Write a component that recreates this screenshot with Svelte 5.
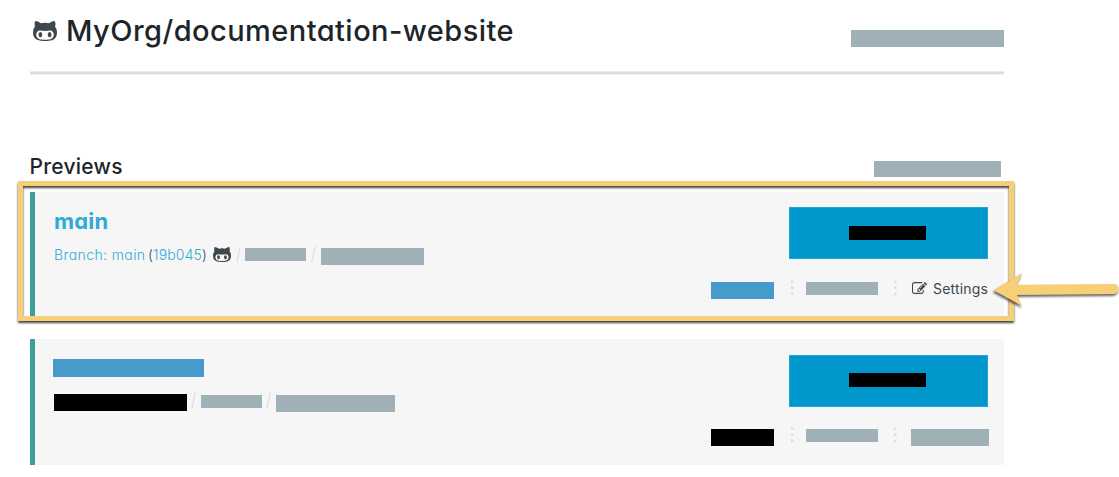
<script>
  const catPath = "M640 1088q0 40-12.5 82t-43 76-72.5 34-72.5-34-43-76-12.5-82 12.5-82 43-76 72.5-34 72.5 34 43 76 12.5 82zm640 0q0 40-12.5 82t-43 76-72.5 34-72.5-34-43-76-12.5-82 12.5-82 43-76 72.5-34 72.5 34 43 76 12.5 82zm160 0q0-120-69-204t-187-84q-41 0-195 21-71 11-157 11t-157-11q-152-21-195-21-118 0-187 84t-69 204q0 88 32 153.5t81 103 122 60 140 29.5 149 7h168q82 0 149-7t140-29.5 122-60 81-103 32-153.5zm224-176q0 207-61 331-38 77-105.5 133t-141 86-170 47.5-171.5 22-167 4.5q-78 0-142-3t-147.5-12.5-152.5-30-137-51.5-121-81-86-115q-62-123-62-331 0-237 136-396-27-82-27-170 0-116 51-218 108 0 190 39.5t189 123.5q147-35 309-35 148 0 280 32 105-82 187-121t189-39q51 102 51 218 0 87-27 168 136 160 136 398z";
  const editPath = "M888 1184l116-116-152-152-116 116v56h96v96h56zm440-720q-16-16-33 1l-350 350q-17 17-1 33t33-1l350-350q17-17 1-33zm80 594v190q0 119-84.5 203.5t-203.5 84.5h-832q-119 0-203.5-84.5t-84.5-203.5v-832q0-119 84.5-203.5t203.5-84.5h832q63 0 117 25 15 7 18 23 3 17-9 29l-49 49q-14 14-32 8-23-6-45-6h-832q-66 0-113 47t-47 113v832q0 66 47 113t113 47h832q66 0 113-47t47-113v-126q0-13 9-22l64-64q15-15 35-7t20 29zm-96-738l288 288-672 672h-288v-288zm444 132l-92 92-288-288 92-92q28-28 68-28t68 28l152 152q28 28 28 68t-28 68z";
</script>

{#snippet cat()}
  <svg class="cat" viewBox="0 128 1664 1408" preserveAspectRatio="none"><path d={catPath} /></svg>
{/snippet}

{#snippet slash()}
  <svg class="slash" viewBox="0 0 5 17"><path d="M4.3 .5 .8 16.3" /></svg>
{/snippet}

{#snippet dots()}
  <svg class="dots" viewBox="0 0 3 16"><path d="M0 .5h2.5v2.5H0zM0 6.5h2.5V9H0zM0 12.8h2.5v2.5H0z" /></svg>
{/snippet}

<main>
  <header>
    <h1>{@render cat()}<span>MyOrg/documentation-website</span></h1>
    <div class="bar header-bar"></div>
  </header>
  <div class="rule"></div>

  <div class="heading">
    <h2>Previews</h2>
    <div class="bar heading-bar"></div>
  </div>

  <section class="card first">
    <div class="info">
      <h3>main</h3>
      <div class="meta">
        <span class="branch">Branch: main</span>
        <span class="commit">(<b>19b045</b>)</span>
        {@render cat()}
        {@render slash()}
        <div class="bar short"></div>
        {@render slash()}
        <div class="bar long"></div>
      </div>
    </div>
    <div class="side">
      <div class="button"><i></i></div>
      <div class="actions">
        <div class="bar action blue"></div>
        {@render dots()}
        <div class="bar option"></div>
        {@render dots()}
        <div class="settings">
          <svg class="edit" viewBox="0 128 1792 1408"><path d={editPath} /></svg>
          <span>Settings</span>
        </div>
      </div>
    </div>
    <div class="frame"></div>
    <svg class="arrow" viewBox="990 268 129 44">
      <path d="M993.5 290.3 1022.3 273 1016.8 284.7 1114 284Q1118.7 284.3 1118.7 288.8T1114 294L1016.8 295 1022.3 306Z" />
    </svg>
  </section>

  <section class="card second">
    <div class="info">
      <div class="bar title-bar blue"></div>
      <div class="meta">
        <div class="bar branch-bar black"></div>
        {@render slash()}
        <div class="bar short"></div>
        {@render slash()}
        <div class="bar long"></div>
      </div>
    </div>
    <div class="side">
      <div class="button"><i></i></div>
      <div class="actions">
        <div class="bar action black"></div>
        {@render dots()}
        <div class="bar option"></div>
        {@render dots()}
        <div class="bar last"></div>
      </div>
    </div>
  </section>
</main>

<style>
  :global(body) { margin: 0; background: #fff; overflow: hidden; }
  * { box-sizing: border-box; }
  main {
    width: 1119px;
    height: 477px;
    overflow: hidden;
    padding: 0 115px 0 30px;
    font-family: Inter, "Open Sans", sans-serif;
    font-feature-settings: "cv11";
    color: #1c2529;
  }
  h1, h2, h3 { margin: 0; font-weight: 500; white-space: nowrap; }
  svg { display: block; flex: none; }
  .bar { flex: none; height: 17px; background: #a0b0b7; }
  .bar.blue { background: #479bcb; }
  .bar.black { background: #000; }

  header { display: flex; justify-content: space-between; height: 71px; }
  h1 { display: flex; height: 62px; padding-left: 3px; font-size: 29px; line-height: 62px; letter-spacing: 0.45px; }
  h1 .cat { width: 24px; height: 20px; margin: 20.5px 9px 0 0; }
  .header-bar { width: 153px; margin-top: 30px; }
  .cat { fill: #3d474c; }
  .rule { height: 4px; border-top: 1px solid #ebebeb; border-bottom: 1px solid #f4f4f4; background: #dcdcdc; }

  .heading { display: flex; justify-content: space-between; height: 117px; padding: 76px 3px 0 0; }
  h2 { height: 32px; font-size: 21px; line-height: 32px; letter-spacing: 0.25px; margin-left: -0.5px; }
  .heading-bar { width: 127px; height: 16px; margin-top: 10px; }

  .card {
    position: relative;
    display: flex;
    justify-content: space-between;
    height: 126px;
    padding: 15px 16px 0 19px;
    border-left: 5px solid #3ba09a;
    background: #f6f6f6;
  }
  .first { margin-bottom: 21px; }
  .second { padding-top: 16px; }

  h3 { height: 28px; color: #31aad5; font-size: 22px; line-height: 28px; font-weight: 700; letter-spacing: 0.2px; }
  .meta { display: flex; font-size: 14px; font-weight: 300; white-space: nowrap; }
  .first .meta { height: 24px; margin-top: 1px; line-height: 38px; }
  .branch { width: 94px; color: #31aad5; letter-spacing: 0.4px; }
  .commit { width: 65px; color: #3d474c; letter-spacing: 0.15px; }
  .commit b { font-weight: 300; color: #31aad5; }
  .meta .cat { width: 18px; height: 15px; margin-top: 11px; }
  .slash { width: 5px; height: 17px; margin: 10px 4px 0 5px; fill: none; stroke: #dedede; stroke-width: 1.2; }
  .short { width: 61px; height: 13px; margin-top: 12px; }
  .long { width: 103px; margin-top: 12px; }
  .short + .slash { margin-left: 5px; margin-right: 5px; }

  .title-bar { width: 151px; height: 18px; margin: 4px 0 0 -1px; }
  .second .meta { margin-top: 5px; }
  .branch-bar { width: 133px; margin-top: 12px; }
  .second .branch-bar + .slash { margin-left: 4px; margin-right: 5px; }
  .second .short + .slash { margin-left: 4px; margin-right: 5px; }
  .second .long { width: 119px; margin-top: 13px; }
  .second .short { margin-top: 13px; }

  .side { width: 278px; }
  .button {
    display: flex;
    justify-content: center;
    width: 199px;
    height: 52px;
    margin-left: 79px;
    padding: 19px 2px 0 0;
    background: #0098cc;
    box-shadow: inset 0 0 0 1px #22a4d2;
  }
  .button i { width: 77px; height: 14px; background: #000; }
  .second .button { padding-top: 18px; }
  .actions { display: flex; margin-top: 21px; padding-left: 1px; }
  .action { width: 63px; margin-top: 2px; }
  .option { width: 72px; height: 13px; margin-top: 2px; }
  .dots { width: 3px; height: 16px; fill: #dedede; }
  .action + .dots { margin: 0 12px 0 17px; }
  .option + .dots { margin: 0 15px 0 16px; }
  .second .actions { margin-top: 20px; }
  .last { width: 78px; margin: 2px -1px 0 -1px; }
  .settings { display: flex; height: 18px; color: #3d474c; font-size: 14px; font-weight: 400; line-height: 18px; letter-spacing: 0.2px; }
  .edit { width: 15px; height: 12px; margin: 2px 6px 0 0; fill: #3d474c; }

  .frame {
    position: absolute;
    inset: -11px -10px -3px -17px;
    border: 5px solid #f6cf76;
    filter: drop-shadow(0 2px 1px rgba(0, 0, 0, 0.75));
  }
  .arrow {
    position: absolute;
    left: 955px;
    top: 76px;
    width: 129px;
    height: 44px;
    fill: #f6cf76;
    filter: drop-shadow(-0.5px 2px 1px rgba(0, 0, 0, 0.6));
  }
</style>
